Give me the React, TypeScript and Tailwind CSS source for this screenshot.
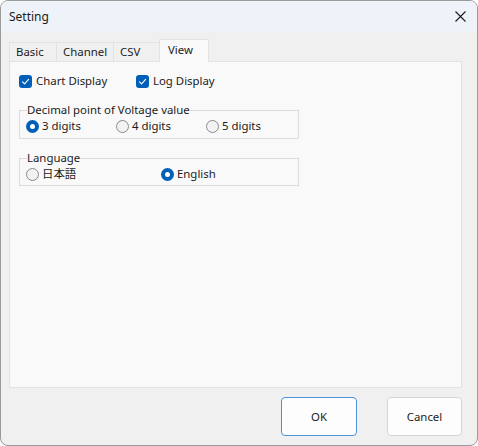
import React from "react";

const font = { fontFamily: '"Noto Sans", "Noto Sans CJK JP", sans-serif' };

function Check({ label }: { label: string }) {
  return (
    <div className="flex items-center w-[117px] h-[16px]">
      <span className="w-[13px] h-[13px] rounded-[3px] bg-[#005fb8] flex items-center justify-center">
        <svg width="9" height="9" viewBox="0 0 9 9" fill="none">
          <path d="M1.5 4.8 L3.6 6.8 L7.6 2.4" stroke="white" strokeWidth="1.1" strokeLinecap="round" strokeLinejoin="round" />
        </svg>
      </span>
      <span className="ml-[4px] text-[11.4px] leading-[16px] text-[#1b1b1b]">{label}</span>
    </div>
  );
}

function Radio({ label, checked, w }: { label: string; checked?: boolean; w: string }) {
  return (
    <div className={`flex items-center h-[16px] ${w}`}>
      {checked ? (
        <span className="w-[13px] h-[13px] rounded-full bg-[#005fb8] flex items-center justify-center">
          <span className="w-[5px] h-[5px] rounded-full bg-white" />
        </span>
      ) : (
        <span className="w-[13px] h-[13px] rounded-full border border-[#8a8a8a] bg-[#f3f3f3]" />
      )}
      <span className="ml-[3px] text-[11.4px] leading-[16px] text-[#1b1b1b]">{label}</span>
    </div>
  );
}

function Tab({ label, w, selected }: { label: string; w: string; selected?: boolean }) {
  if (selected) {
    return (
      <div className={`${w} h-[23px] -mb-px relative z-10 bg-[#f9f9f9] border border-b-0 border-[#e2e2e2] flex items-start pl-[8px] pt-[2px] text-[11.4px] leading-[16px] text-[#1b1b1b]`}>
        {label}
      </div>
    );
  }
  return (
    <div className={`${w} h-[19px] bg-[#f0f0f0] border border-b-0 border-r-0 border-[#e2e2e2] flex items-center pl-[6px] text-[11.4px] leading-[16px] text-[#1b1b1b]`}>
      {label}
    </div>
  );
}

export default function App() {
  return (
    <div className="w-[478px] h-[446px] bg-[#f0f0f0] border border-[#9a9a9a] rounded-[8px] overflow-hidden flex flex-col" style={font}>
      <div className="h-[31px] bg-[#eef3fa] flex items-center justify-between pl-[8px] pr-[11px] shrink-0">
        <span className="text-[12px] leading-[16px] text-[#1b1b1b]">Setting</span>
        <svg width="11" height="11" viewBox="0 0 11 11" fill="none">
          <path d="M0.5 0.5 L10.5 10.5 M10.5 0.5 L0.5 10.5" stroke="#1b1b1b" strokeWidth="1.1" />
        </svg>
      </div>
      <div className="px-[8px] pt-[7px] flex flex-col">
        <div className="flex items-end h-[22px]">
          <Tab label="Basic" w="w-[47px]" />
          <Tab label="Channel" w="w-[57px]" />
          <Tab label="CSV" w="w-[46px]" />
          <Tab label="View" w="w-[50px]" selected />
        </div>
        <div className="h-[327px] w-[453px] bg-[#f9f9f9] border border-[#e2e2e2] pl-[9px] pt-[11px] flex flex-col">
          <div className="flex">
            <Check label="Chart Display" />
            <Check label="Log Display" />
          </div>
          <fieldset className="mt-[13px] w-[280px] border border-[#dcdcdc] pl-[6px] pb-[4px] m-0 p-0">
            <legend className="ml-[1px] p-0 text-[11.4px] leading-[16px] text-[#1b1b1b]">Decimal point of Voltage value</legend>
            <div className="flex">
              <Radio label="3 digits" checked w="w-[90px]" />
              <Radio label="4 digits" w="w-[90px]" />
              <Radio label="5 digits" w="w-[90px]" />
            </div>
          </fieldset>
          <fieldset className="mt-[11px] w-[280px] border border-[#dcdcdc] pl-[6px] pb-[3px] m-0 p-0">
            <legend className="ml-[1px] p-0 text-[11.4px] leading-[16px] text-[#1b1b1b]">Language</legend>
            <div className="flex">
              <Radio label="日本語" w="w-[135px]" />
              <Radio label="English" checked w="w-[135px]" />
            </div>
          </fieldset>
        </div>
      </div>
      <div className="flex justify-end gap-[30px] pr-[15px] pt-[9px]">
        <button className="w-[76px] h-[39px] rounded-[4px] bg-[#fdfdfd] border border-[#4a94dc] text-[11.4px] text-[#1b1b1b]">OK</button>
        <button className="w-[75px] h-[39px] rounded-[4px] bg-[#fdfdfd] border border-[#d5d5d5] text-[11.4px] text-[#1b1b1b]">Cancel</button>
      </div>
    </div>
  );
}
